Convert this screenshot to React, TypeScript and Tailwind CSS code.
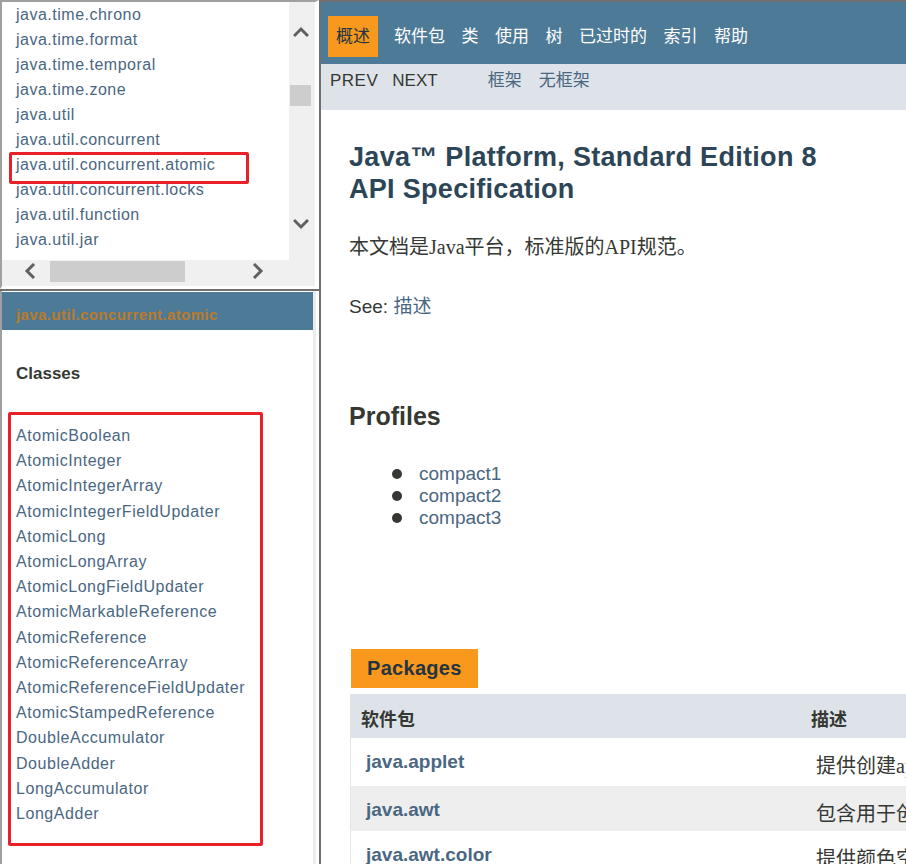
import React from "react";

const pkgs = [
  "java.time.chrono",
  "java.time.format",
  "java.time.temporal",
  "java.time.zone",
  "java.util",
  "java.util.concurrent",
  "java.util.concurrent.atomic",
  "java.util.concurrent.locks",
  "java.util.function",
  "java.util.jar",
];

const classes = [
  "AtomicBoolean",
  "AtomicInteger",
  "AtomicIntegerArray",
  "AtomicIntegerFieldUpdater",
  "AtomicLong",
  "AtomicLongArray",
  "AtomicLongFieldUpdater",
  "AtomicMarkableReference",
  "AtomicReference",
  "AtomicReferenceArray",
  "AtomicReferenceFieldUpdater",
  "AtomicStampedReference",
  "DoubleAccumulator",
  "DoubleAdder",
  "LongAccumulator",
  "LongAdder",
];

const navItems = ["软件包", "类", "使用", "树", "已过时的", "索引", "帮助"];

const rows = [
  { name: "java.applet", desc: "提供创建applet所必需的类以及applet用来与其applet上下文进行通信的类。", bg: "bg-white", h: "h-[48px]" },
  { name: "java.awt", desc: "包含用于创建用户界面和绘制图形和图像的所有类。", bg: "bg-[#eeeeef]", h: "h-[45px]" },
  { name: "java.awt.color", desc: "提供颜色空间的类。", bg: "bg-white", h: "h-[46px]" },
];

function Chevron({ dir }: { dir: "up" | "down" | "left" | "right" }) {
  const pts: Record<string, string> = {
    up: "1,10 8,3 15,10",
    down: "1,4 8,11 15,4",
    left: "10,1 3,8 10,15",
    right: "4,1 11,8 4,15",
  };
  return (
    <svg width="16" height="16" viewBox="0 0 16 16">
      <polyline points={pts[dir]} fill="none" stroke="#606060" strokeWidth="3" />
    </svg>
  );
}

export default function App() {
  return (
    <div className="relative w-[906px] h-[864px] overflow-hidden bg-white flex font-['Liberation_Sans',Arial,'Noto_Sans_CJK_SC',sans-serif]">
      {/* LEFT COLUMN */}
      <div className="w-[319px] shrink-0 flex flex-col">
        {/* top frame: package list */}
        <div className="h-[289px] shrink-0 flex flex-col bg-[#f0f0f0] border-t-2 border-l-2 border-t-[#a0a0a0] border-l-[#a0a0a0] border-r-4 border-r-white border-b-[3px] border-b-white">
          <div className="flex h-[258px] shrink-0">
            <div className="w-[287px] bg-white overflow-hidden">
              <ul className="pl-[14px] text-[16px] leading-[25px] tracking-[0.5px] text-[#4a6782] whitespace-nowrap">
                {pkgs.map((p) => (
                  <li key={p}>{p}</li>
                ))}
              </ul>
            </div>
            <div className="w-[23px] bg-[#f0f0f0] flex flex-col items-center">
              <div className="mt-[24px] ml-[1px]">
                <Chevron dir="up" />
              </div>
              <div className="mt-[43px] w-[21px] h-[21px] bg-[#cdcdcd]" />
              <div className="mt-[110px] ml-[1px]">
                <Chevron dir="down" />
              </div>
            </div>
          </div>
          <div className="flex h-[22px] shrink-0">
            <div className="w-[287px] flex items-center">
              <div className="ml-[22px]">
                <Chevron dir="left" />
              </div>
              <div className="ml-[10px] w-[135px] h-[21px] bg-[#cdcdcd]" />
              <div className="ml-[65px]">
                <Chevron dir="right" />
              </div>
            </div>
            <div className="w-[23px]" />
          </div>
        </div>
        <div className="h-[2px] shrink-0 bg-[#6f6f6f]" />
        {/* bottom frame: classes */}
        <div className="flex-1 flex border-l-2 border-l-[#a0a0a0] border-r-[3px] border-r-white">
          <div className="w-[311px] bg-white pt-px">
            <div className="h-[38px] bg-[#4d7a97] pl-[14px] pt-[13px] text-[15px] leading-[20px] font-bold tracking-[0.4px] text-[#bb7a2a] whitespace-nowrap">
              java.util.concurrent.atomic
            </div>
            <div className="mt-[33px] pl-[14px] text-[17px] leading-[22px] font-bold text-[#353833]">Classes</div>
            <ul className="mt-[38px] pl-[14px] text-[16px] leading-[25.2px] tracking-[0.55px] text-[#4a6782] whitespace-nowrap">
              {classes.map((c) => (
                <li key={c}>{c}</li>
              ))}
            </ul>
          </div>
          <div className="w-[3px] bg-[#ececec]" />
        </div>
      </div>

      {/* RIGHT COLUMN */}
      <div className="flex-1 min-w-0 flex flex-col border-l-2 border-t-2 border-[#6f6f6f] overflow-hidden">
        {/* top nav */}
        <div className="h-[62px] shrink-0 bg-[#4d7a97] flex items-start pl-[7px] pt-[14px] text-[17px] leading-[41px]">
          <div className="w-[50px] h-[41px] bg-[#f8981d] text-[#253441] text-center">概述</div>
          <div className="ml-[16px] flex gap-[16.5px] text-white">
            {navItems.map((n) => (
              <span key={n}>{n}</span>
            ))}
          </div>
        </div>
        {/* sub nav */}
        <div className="h-[46px] shrink-0 bg-[#dee3e9] flex items-start pl-[9px] pt-[7px] text-[17px] leading-[20px] whitespace-nowrap">
          <span className="text-[#353833] tracking-[0.5px]">PREV</span>
          <span className="ml-[14px] text-[#353833]">NEXT</span>
          <span className="ml-[50px] text-[#4a6782]">框架</span>
          <span className="ml-[17px] text-[#4a6782]">无框架</span>
        </div>

        {/* content */}
        <div className="pl-[28px]">
          <h1 className="mt-[31px] text-[27px] leading-[32px] font-bold text-[#2c4557] tracking-[0.3px]">
            Java™ Platform, Standard Edition 8
            <br />
            API Specification
          </h1>
          <div className="mt-[30px] text-[20px] leading-[24px] text-[#353833] font-['Liberation_Serif','Noto_Sans_CJK_SC',serif] whitespace-nowrap">
            本文档是Java平台，标准版的API规范。
          </div>
          <div className="mt-[36px] text-[19px] leading-[24px] text-[#353833]">
            See: <span className="text-[#4a6782]">描述</span>
          </div>
          <h2 className="mt-[82px] text-[25px] leading-[30px] font-bold text-[#353833]">Profiles</h2>
          <ul className="mt-[32px] text-[19px] leading-[22px] text-[#4a6782]">
            {["compact1", "compact2", "compact3"].map((c) => (
              <li key={c} className="flex items-center">
                <span className="ml-[43px] w-[10px] h-[10px] rounded-full bg-[#353833]" />
                <span className="ml-[17px]">{c}</span>
              </li>
            ))}
          </ul>

          <div className="mt-[120px] ml-[2px] w-[127px] h-[39px] bg-[#f8981d] pl-[16px] text-[20px] leading-[39px] font-bold text-[#253441] tracking-[0.3px]">
            Packages
          </div>
          <div className="mt-[6px] ml-[1px] border-l border-[#e4e4e4] w-[700px]">
            <div className="h-[44px] bg-[#dee3e9] flex items-start pt-[12px] text-[18px] leading-[28px] font-bold text-[#353833]">
              <div className="w-[450px] shrink-0 pl-[10px]">软件包</div>
              <div className="pl-[10px]">描述</div>
            </div>
            {rows.map((r) => (
              <div key={r.name} className={`${r.bg} ${r.h} flex items-start pt-[12px] whitespace-nowrap`}>
                <div className="w-[450px] shrink-0 pl-[15px] text-[19px] leading-[24px] font-bold text-[#4a6782]">{r.name}</div>
                <div className="shrink-0 pl-[15px] pt-[4px] text-[20px] leading-[24px] text-[#353833] font-['Liberation_Serif','Noto_Sans_CJK_SC',serif]">
                  {r.desc}
                </div>
              </div>
            ))}
          </div>
        </div>
      </div>

      {/* red annotation boxes */}
      <div className="absolute left-[9px] top-[152px] w-[240px] h-[32px] border-[3px] border-[#e8202a] rounded-[2px] pointer-events-none" />
      <div className="absolute left-[8px] top-[412px] w-[255px] h-[434px] border-[3px] border-[#e8202a] rounded-[2px] pointer-events-none" />
    </div>
  );
}
